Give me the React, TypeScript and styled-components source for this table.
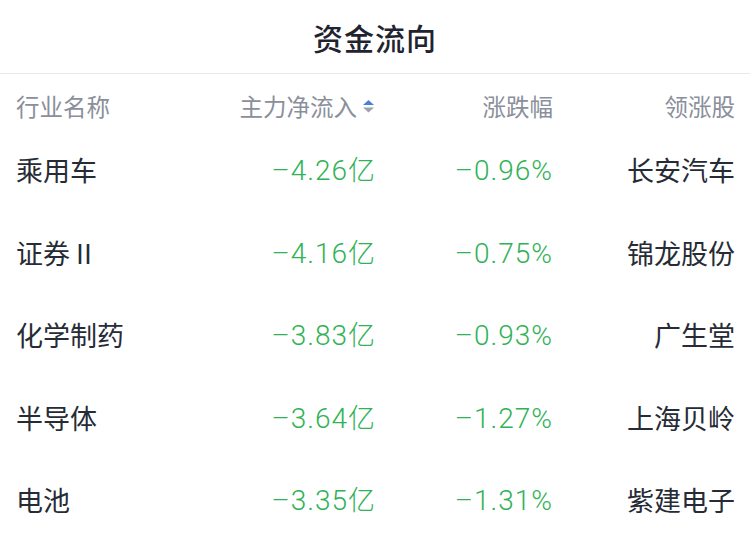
import React from "react";
import styled, { createGlobalStyle } from "styled-components";

const GlobalStyle = createGlobalStyle`
  html, body {
    margin: 0;
    padding: 0;
    background: #ffffff;
  }
  body {
    font-family: "Noto Sans CJK SC", "Noto Sans", sans-serif;
  }
`;

type Row = {
  name: string;
  flow: string;
  change: string;
  leader: string;
};

const rows: Row[] = [
  { name: "乘用车", flow: "–4.26", change: "–0.96%", leader: "长安汽车" },
  { name: "证券 II", flow: "–4.16", change: "–0.75%", leader: "锦龙股份" },
  { name: "化学制药", flow: "–3.83", change: "–0.93%", leader: "广生堂" },
  { name: "半导体", flow: "–3.64", change: "–1.27%", leader: "上海贝岭" },
  { name: "电池", flow: "–3.35", change: "–1.31%", leader: "紫建电子" },
];

const SortIcon: React.FC = () => (
  <svg width="13" height="16" viewBox="0 0 13 16">
    <polygon points="6.5,2 12,7 1,7" fill="#4a7fdc" />
    <polygon points="1,9.5 12,9.5 6.5,14.5" fill="#9da2ad" />
  </svg>
);

const App: React.FC = () => {
  return (
    <Page>
      <GlobalStyle />
      <TitleBar>资金流向</TitleBar>
      <Table>
        <HeaderRow>
          <HeadCell>行业名称</HeadCell>
          <HeadCell $align="right">
            主力净流入
            <SortIcon />
          </HeadCell>
          <HeadCell $align="right">涨跌幅</HeadCell>
          <HeadCell $align="right">领涨股</HeadCell>
        </HeaderRow>
        {rows.map((r) => (
          <DataRow key={r.name}>
            <Cell>{r.name}</Cell>
            <Cell $align="right" $green>
              <Num>{r.flow}</Num>亿
            </Cell>
            <Cell $align="right" $green>
              <Num>{r.change}</Num>
            </Cell>
            <Cell $align="right">{r.leader}</Cell>
          </DataRow>
        ))}
      </Table>
    </Page>
  );
};

const Page = styled.div`
  width: 750px;
  height: 548px;
  overflow: hidden;
  background: #ffffff;
`;

const TitleBar = styled.div`
  height: 73px;
  display: flex;
  align-items: center;
  justify-content: center;
  border-bottom: 1px solid #e9e9ec;
  font-size: 30px;
  font-weight: 500;
  color: #1f2430;
  letter-spacing: 1px;
`;

const Table = styled.div`
  padding: 0 15px 0 16px;
`;

const HeaderRow = styled.div`
  display: grid;
  grid-template-columns: 180px 179px 178px 182px;
  height: 55px;
  padding-top: 9px;
  align-items: center;
  box-sizing: border-box;
`;

const HeadCell = styled.div<{ $align?: "right" }>`
  display: flex;
  align-items: center;
  justify-content: ${(p) => (p.$align === "right" ? "flex-end" : "flex-start")};
  gap: 5px;
  font-size: 23.5px;
  color: #8a8f9b;
  white-space: nowrap;
`;

const DataRow = styled.div`
  display: grid;
  grid-template-columns: 180px 179px 178px 182px;
  height: 82.5px;
  align-items: center;
`;

const Cell = styled.div<{ $align?: "right"; $green?: boolean }>`
  text-align: ${(p) => (p.$align === "right" ? "right" : "left")};
  font-size: 27px;
  line-height: 40px;
  font-weight: ${(p) => (p.$green ? 300 : 400)};
  color: ${(p) => (p.$green ? "#30b256" : "#262b36")};
  white-space: nowrap;
`;

const Num = styled.span`
  font-family: Roboto, "Noto Sans CJK SC", sans-serif;
  font-size: 28px;
  font-weight: 300;
  letter-spacing: 1px;
`;

export default App;
